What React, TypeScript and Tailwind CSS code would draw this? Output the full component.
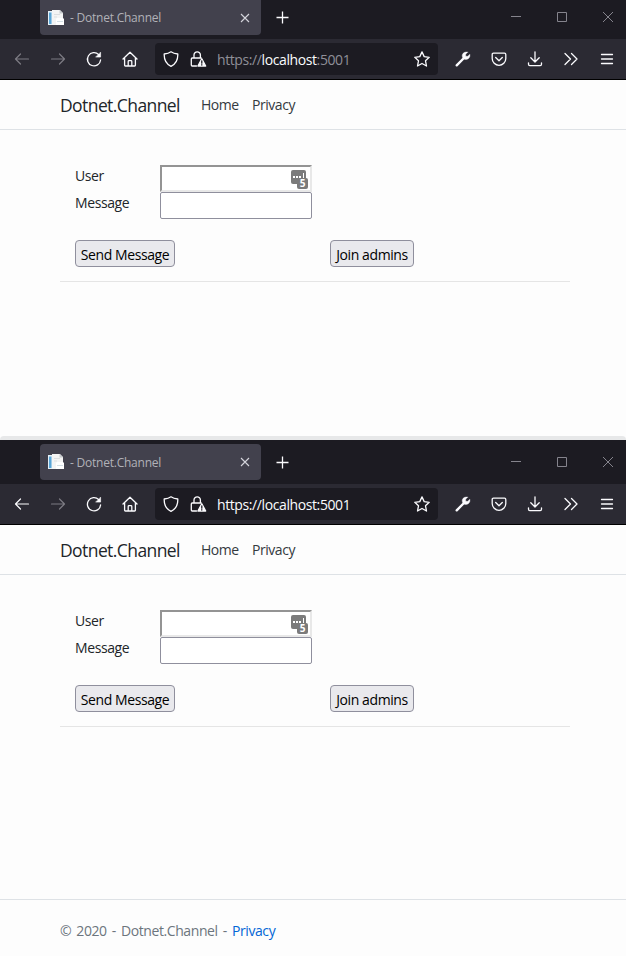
import React from "react";

type IconProps = { children: React.ReactNode; className?: string };

function Icon({ children, className = "" }: IconProps) {
  return (
    <svg
      viewBox="0 0 16 16"
      className={`size-4 shrink-0 ${className}`}
      fill="none"
      stroke="currentColor"
      strokeWidth="1.3"
      strokeLinecap="round"
      strokeLinejoin="round"
    >
      {children}
    </svg>
  );
}

function ToolButton({ children, dim = false }: { children: React.ReactNode; dim?: boolean }) {
  return (
    <span className={`flex h-8 w-9 shrink-0 items-center justify-center ${dim ? "text-[#7c7b83]" : "text-[#fbfbfe]"}`}>
      {children}
    </span>
  );
}

function Favicon() {
  return (
    <svg viewBox="0 0 16 16" className="size-4 shrink-0">
      <path d="M0 1h5v14H0z" fill="#e5f1f8" />
      <path d="M1 2.500h2.500v11.500H1z" fill="#5aa5d6" />
      <path d="M4 0h8l3 3v12H4z" fill="#f4f4f4" />
      <path d="M6 4.500h6M6 7h3" stroke="#dcdfe1" />
      <path d="M11.500 0v3.500H15z" fill="#c5c9cc" />
      <path d="M8 9l1-1h6l1 1v6H8z" fill="#fff" />
      <path d="M9 11.500h6" stroke="#d3dfe5" />
    </svg>
  );
}

function TitleBar({ first }: { first: boolean }) {
  return (
    <div className={`flex items-start bg-[#1c1b22] pl-10 ${first ? "h-[39px]" : "h-11 pt-1"}`}>
      <div className={`flex w-[221px] items-center bg-[#42414d] pl-2 pr-[11px] ${first ? "h-[35px] rounded-b" : "h-9 rounded"}`}>
        <Favicon />
        <span className={`ml-[6px] flex-1 whitespace-nowrap text-[12px] tracking-[-0.23px] text-[#b1b1b8] ${first ? "" : "pt-px"}`}>- Dotnet.Channel</span>
        <svg viewBox="0 0 10 10" className="size-[10px]" stroke="#d5d5dc" strokeWidth="1.1">
          <path d="M1 1l8 8M9 1L1 9" />
        </svg>
      </div>
      <svg viewBox="0 0 13 13" className={`ml-[15px] size-[13px] ${first ? "mt-[11px]" : "mt-3"}`} stroke="#fbfbfe" strokeWidth="1.3">
        <path d="M6.5 .5v12M.5 6.5h12" />
      </svg>
      <div className={`ml-auto flex gap-9 pr-[13px] ${first ? "mt-3" : "mt-[13px]"}`}>
        <svg viewBox="0 0 10 10" className="size-[10px]" stroke="#85848d"><path d="M0 4.5h10" /></svg>
        <svg viewBox="0 0 10 10" className="size-[10px]" stroke="#85848d" fill="none"><path d="M.5 .5h9v9h-9z" /></svg>
        <svg viewBox="0 0 10 10" className="size-[10px]" stroke="#85848d"><path d="M0 0l10 10M10 0L0 10" /></svg>
      </div>
    </div>
  );
}

function Toolbar({ first }: { first: boolean }) {
  return (
    <div className="flex h-[41px] items-center border-b border-black bg-[#2b2a33] pl-1">
      <ToolButton dim={first}>
        <Icon><path d="M14.500 8h-13M6.500 3L1.500 8l5 5" strokeWidth="1.200" /></Icon>
      </ToolButton>
      <ToolButton dim>
        <Icon><path d="M1.500 8h13M9.500 3l5 5-5 5" strokeWidth="1.200" /></Icon>
      </ToolButton>
      <ToolButton>
        <Icon className="overflow-visible">
          <path d="M12.700 3.600A6.600 6.600 0 1 0 14.600 9" strokeWidth="1.300" />
          <path d="M14.600 1.500v4.600H10z" fill="currentColor" strokeWidth=".6" />
        </Icon>
      </ToolButton>
      <ToolButton>
        <Icon>
          <path d="M1 8l7-6.800L15 8M2.600 7v7.200q0 .8.8.8h9.200q.8 0 .8-.8V7M6.200 15v-4.500q0-.8.8-.8h2q.8 0 .8.8V15" />
        </Icon>
      </ToolButton>
      <div className="ml-[7px] flex h-8 w-[283px] shrink-0 items-center rounded bg-[#1c1b22] pl-2 pr-2 text-[#fbfbfe]">
        <Icon><path d="M8 .8c2 1.500 4.200 2 6.800 2.200C15 8.500 13 13 8 15.300 3 13 1 8.500 1.200 3 3.800 2.800 6 2.300 8 .8z" /></Icon>
        <Icon className="ml-[11px] overflow-visible">
          <path d="M4 7V4a3.200 3.200 0 0 1 6.400 0v3M6.500 15H2.200q-.9 0-.9-.9V8q0-1 .9-1h9" />
          <path d="M11.800 7.700l3.900 7.300H7.900z" fill="currentColor" />
          <path d="M11.800 9.800v2.400M11.800 13.700v.4" stroke="#1c1b22" />
        </Icon>
        <span className={`ml-[11px] flex-1 whitespace-nowrap text-[14px] tracking-[-0.4px] ${first ? "text-[#8f8f98]" : "text-[#fbfbfe]"}`}>
          https://<span className="text-[#fbfbfe]">localhost</span>:5001
        </span>
        <Icon><path d="M8 .9l2.200 4.700 5 .7-3.700 3.500 1 5.200L8 12.500 3.500 15l1-5.200L.8 6.300l5-.7z" /></Icon>
      </div>
      <div className="ml-[7px] flex">
        <ToolButton>
          <Icon>
            <path d="M1.700 14.300L8.500 7.500" strokeWidth="2.400" />
            <path d="M12.600 1.200L10.700 3.200v2.100h2.100l2-2c.7 2.700-1.200 5.200-3.800 5.200-2.200 0-3.800-1.700-3.800-3.800 0-2.500 2.700-4.300 5.400-3.500z" fill="currentColor" strokeWidth=".4" />
          </Icon>
        </ToolButton>
        <ToolButton>
          <Icon><path d="M2.500 2.200h11q1.300 0 1.300 1.300v4a6.800 6.800 0 0 1-13.600 0v-4q0-1.300 1.300-1.300zM4.700 6.500L8 9.700l3.300-3.200" /></Icon>
        </ToolButton>
        <ToolButton>
          <Icon><path d="M8 .8v10M3.800 6.800L8 11l4.200-4.200M1.500 11.800v1.500q0 1.300 1.300 1.300h10.400q1.300 0 1.300-1.300v-1.500" /></Icon>
        </ToolButton>
        <ToolButton>
          <Icon><path d="M2 2.500L7.500 8 2 13.500M8.500 2.500L14 8l-5.500 5.500" /></Icon>
        </ToolButton>
        <ToolButton>
          <Icon><path d="M2.500 3.500h11M2.500 8h11M2.500 12.500h11" /></Icon>
        </ToolButton>
      </div>
    </div>
  );
}

function PasswordBadge() {
  return (
    <svg viewBox="0 0 17 19" className="h-[19px] w-[17px]">
      <rect x="0" y="0" width="15" height="14" rx="2" fill="#7b7b7b" />
      <path d="M2 7h2M5 7h2M8 7h2" stroke="#fff" strokeWidth="2" />
      <path d="M12.500 3v6" stroke="#fff" />
      <rect x="6" y="8" width="11" height="11" rx="2" fill="#7b7b7b" />
      <text x="11.500" y="17" fontSize="10" fontWeight="700" textAnchor="middle" fill="#fff">5</text>
    </svg>
  );
}

function ActionButton({ children, className }: { children: string; className: string }) {
  return (
    <button className={`flex h-[27px] items-center justify-center whitespace-nowrap rounded border border-[#8f8f9d] bg-[#e9e9ed] pt-px text-[14px] tracking-[-0.4px] text-black ${className}`}>
      {children}
    </button>
  );
}

function Page() {
  return (
    <>
      <nav className="flex h-[50px] items-center border-b border-[#dee2e6] px-[60px] text-[14px] text-[#343a40]">
        <a className="w-[141px] whitespace-nowrap pt-px text-[17.500px] tracking-[-0.58px] text-[#212529]">Dotnet.Channel</a>
        <a className="w-[51px] tracking-[-0.5px]">Home</a>
        <a className="tracking-[-0.45px]">Privacy</a>
      </nav>
      <main className="pl-[60px] pr-14 pt-[35px] text-[14px] text-[#212529]">
        <div className="border-b border-[#e5e5e5] px-[15px] pb-[14px]">
          <div className="flex h-[27px]">
            <label className="w-[85px] leading-[22px] tracking-[-0.4px]">User</label>
            <div className="flex w-[152px] justify-end border-2 border-b-[#e8e8e8] border-l-[#949494] border-r-[#e8e8e8] border-t-[#949494] bg-white pr-[2px] pt-[3px]">
              <PasswordBadge />
            </div>
          </div>
          <div className="flex h-[27px]">
            <label className="w-[85px] leading-[22px] tracking-[-0.4px]">Message</label>
            <div className="w-[152px] rounded-[2px] border border-[#8f8f9d] bg-white" />
          </div>
          <div className="mt-[21px] flex">
            <ActionButton className="w-[100px]">Send Message</ActionButton>
            <ActionButton className="ml-[155px] w-[84px]">Join admins</ActionButton>
          </div>
        </div>
      </main>
    </>
  );
}

export default function App() {
  return (
    <div className="flex h-[956px] w-[626px] flex-col overflow-hidden bg-[#fdfdfd] font-['Open_Sans',sans-serif]">
      <section className="flex h-[436px] shrink-0 flex-col">
        <TitleBar first />
        <Toolbar first />
        <Page />
      </section>
      <div className="h-1 shrink-0 rounded-t bg-[#e7e8e9]" />
      <section className="flex flex-1 flex-col">
        <TitleBar first={false} />
        <Toolbar first={false} />
        <Page />
        <footer className="mt-auto flex h-[57px] items-start border-t border-[#dee2e6] px-[60px] pt-5 text-[14px] text-[#6c757d]">
          <p className="whitespace-nowrap tracking-[-0.4px] [word-spacing:1.800px]">
            © 2020 - Dotnet.Channel - <a className="text-[#0366d6]">Privacy</a>
          </p>
        </footer>
      </section>
    </div>
  );
}
